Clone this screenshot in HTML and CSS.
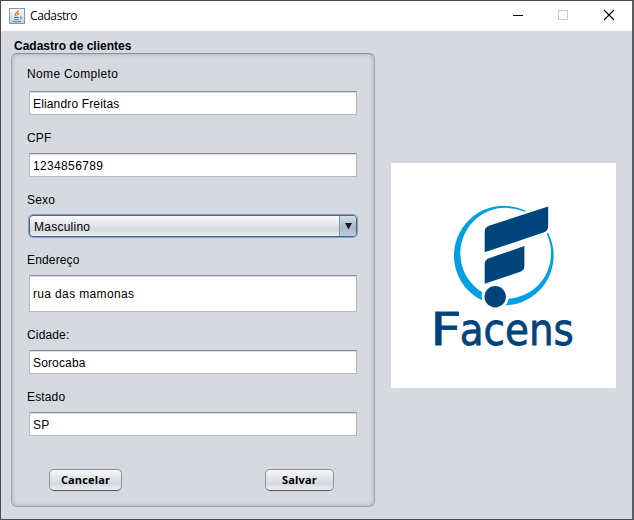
FILE: index.html
```html
<!DOCTYPE html>
<html lang="pt-BR">
<head>
<meta charset="utf-8">
<title>Cadastro</title>
<link rel="stylesheet" href="styles.css">
</head>
<body>
<div class="window">
  <header class="titlebar">
    <svg class="app-icon" width="16" height="16" viewBox="0 0 16 16">
      <defs><linearGradient id="tile" x1="0" y1="0" x2="0" y2="1"><stop offset="0" stop-color="#fbfcfd"/><stop offset="1" stop-color="#c5d3df"/></linearGradient></defs>
      <rect x=".5" y=".5" width="15" height="15" fill="url(#tile)" stroke="#8196a8"/>
      <path d="M9.5 2.5C9.5 4.5 6 4.8 6.2 6.5 6.3 7.5 7.3 7.8 7.3 8.5M10.5 5C8.8 5.5 8.2 6.2 9 7.2" fill="none" stroke="#e3762b" stroke-width="1.3"/>
      <path d="M5 9.5H10M5.5 11.5H9.5M3.5 13.3C6 14 9.5 14 12 13.1M11 9C13.3 8.7 13 10.5 11 11" fill="none" stroke="#4d7898"/>
    </svg>
    <span class="title">Cadastro</span>
    <svg class="controls" width="102" height="12" viewBox="0 0 102 12">
      <path d="M0 6.5H10" stroke="#000"/>
      <rect x="45.5" y="1.5" width="9" height="9" fill="none" stroke="#ccc"/>
      <path d="M91 1L101 11M101 1L91 11" stroke="#000" stroke-width="1.1"/>
    </svg>
  </header>
  <main class="content">
    <section class="form">
      <h1>Cadastro de clientes</h1>
      <div class="panel">
        <label class="name-label wide">Nome Completo</label>
        <div class="field">Eliandro Freitas</div>
        <label class="cpf-label">CPF</label>
        <div class="field wide">1234856789</div>
        <label class="sex-label">Sexo</label>
        <div class="combo"><span class="value">Masculino</span><span class="arrow"><svg width="7" height="7" viewBox="0 0 7 7"><path d="M0 0H7L3.5 6.5Z" fill="#1b1b1b"/></svg></span></div>
        <label class="address-label">Endereço</label>
        <div class="field tall wide">rua das mamonas</div>
        <label class="city-label">Cidade:</label>
        <div class="field">Sorocaba</div>
        <label class="state-label">Estado</label>
        <div class="field">SP</div>
        <div class="actions"><div class="button cancel">Cancelar</div><div class="button save">Salvar</div></div>
      </div>
    </section>
    <aside class="brand">
      <svg width="225" height="225" viewBox="391 163 225 225">
        <path fill="#009fe3" fill-rule="evenodd" d="M454 255.6a49.8 49.8 0 1 0 99.6 0a49.8 49.8 0 1 0 -99.6 0ZM460.3 253.3a45.4 45.4 0 1 0 90.8 0a45.4 45.4 0 1 0 -90.8 0Z"/>
        <g fill="#00447c">
          <path class="gap" d="M484.7 232Q484.7 227.2 489 225.7L548.2 206.5V226Q548.2 231 543.5 232.5L484.7 252.2Z"/>
          <path d="M484.7 264Q484.7 259.7 489 258.2L524.4 246V266Q524.4 270.3 520.3 271.8L484.7 283.7Z"/>
          <circle cx="495.2" cy="296.7" r="12" fill="#fff" stroke="#fff" stroke-width="3"/>
          <circle cx="495.2" cy="296.7" r="10.7"/>
        </g>
        <text class="wordmark"><tspan x="430.6" y="345" textLength="31" lengthAdjust="spacingAndGlyphs">F</tspan><tspan x="459.8" y="345" textLength="114" lengthAdjust="spacingAndGlyphs">acens</tspan></text>
      </svg>
    </aside>
  </main>
</div>
</body>
</html>
```
FILE: styles.css
```css
* { box-sizing: border-box; }
body {
  margin: 0;
  width: 634px;
  height: 520px;
  overflow: hidden;
  font: 12px/14px "Liberation Sans", Arial, sans-serif;
  letter-spacing: .15px;
  color: #000;
}
.window {
  height: 520px;
  border: 1px solid #4b4a50;
  border-right: 2px solid #5c5d62;
  background: #d6d9e0;
}
.titlebar {
  height: 30px;
  display: flex;
  align-items: center;
  padding: 0 17px 0 8px;
  background: #fff;
}
.app-icon { margin-top: -1px; }
.title {
  flex: 1;
  margin-left: 5px;
  font: 12px/16px "Open Sans", "Noto Sans", sans-serif;
  letter-spacing: -.4px;
}
.controls { display: block; margin-top: -2px; }
.content { display: flex; height: 488px; }
.form { width: 364px; margin-left: 10px; padding-top: 8px; }
h1 { margin: 0 0 0 3px; font-size: 12px; line-height: 14px; letter-spacing: 0; }
.panel {
  height: 454px;
  padding: 13px 17px 0;
  border: 1px solid #a3a6ab;
  border-top-color: #8c8f94;
  border-radius: 6px;
  box-shadow: inset 0 0 3px 1px #b4b7bd;
}
label { display: block; height: 14px; margin-left: -2px; }
.wide { letter-spacing: .35px; }
.name-label { margin-bottom: 10px; }
.cpf-label,
.sex-label,
.address-label,
.city-label,
.state-label { margin-top: 16px; margin-bottom: 8px; }
.field {
  width: 328px;
  height: 24px;
  display: flex;
  align-items: center;
  padding: 1px 3px 0;
  border: 1px solid #b7b9be;
  border-top-color: #8d8e91;
  background: #fff;
  box-shadow: inset 0 1px #dadbde;
}
.tall { height: 37px; }
.combo {
  display: flex;
  width: 328px;
  height: 22px;
  border: 1px solid #59636f;
  border-radius: 4px;
  background: linear-gradient(#fbfbfc, #e1e3e7 48%, #d5d8dc 70%, #eef0f4);
  box-shadow: 0 0 0 1px #75a5d0;
  overflow: hidden;
}
.value { flex: 1; padding: 4px; letter-spacing: .25px; }
.arrow {
  display: flex;
  align-items: center;
  justify-content: center;
  width: 17px;
  border-left: 1px solid #7e95a9;
  background: linear-gradient(#d4e0e9, #a6b9cb 55%, #b9cee1);
}
.actions { display: flex; margin: 33px 0 0 20px; gap: 143px; }
.button {
  height: 22px;
  border: 1px solid #8e9197;
  border-bottom-color: #52565d;
  border-radius: 5px;
  background: linear-gradient(#f8f8fa, #dfe1e7 48%, #d5d8df 70%, #edf0f6);
  font: bold 11px/20px "Open Sans", "Noto Sans", sans-serif;
  text-align: center;
}
.cancel { width: 73px; }
.save { width: 69px; }
.brand { width: 225px; height: 225px; margin: 132px 0 0 16px; background: #fff; }
.brand svg { display: block; }
.gap { stroke: #fff; stroke-width: 5px; paint-order: stroke; }
.wordmark { font: 44px "DejaVu Sans", sans-serif; letter-spacing: 0; fill: #00447c; stroke: #00447c; stroke-width: .8px; }
```
